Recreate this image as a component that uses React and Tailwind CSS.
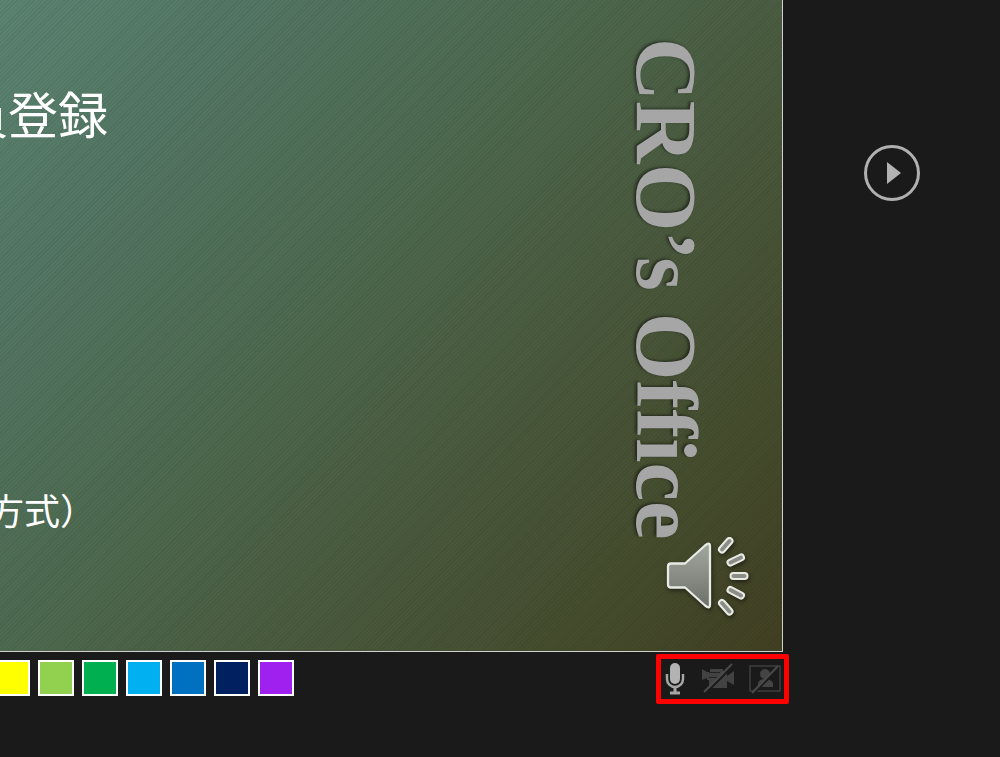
import React from "react";

const swatches = [
  { name: "Yellow", color: "bg-[#ffff00]" },
  { name: "Light green", color: "bg-[#92d050]" },
  { name: "Green", color: "bg-[#00b050]" },
  { name: "Light blue", color: "bg-[#00b0f0]" },
  { name: "Blue", color: "bg-[#0070c0]" },
  { name: "Dark blue", color: "bg-[#002060]" },
  { name: "Purple", color: "bg-[#a020f0]" },
];

function SpeakerIcon() {
  const rays = [
    "M82 29.5 L89.5 21",
    "M90.500 42.500 L101 37.500",
    "M93.500 56 L104.500 56",
    "M90.500 70 L101 75.500",
    "M82 83 L89.500 91.500",
  ];
  return (
    <svg viewBox="26 14 84 80" className="h-20 w-[84px] overflow-visible drop-shadow-[1px_2px_2px_rgba(0,0,0,0.5)]" aria-hidden="true">
      <defs>
        <linearGradient id="cone" x1="0" y1="0" x2="0" y2="1">
          <stop offset="0" stopColor="#a3a89f" />
          <stop offset="1" stopColor="#6d7069" />
        </linearGradient>
      </defs>
      <path d="M31 43.500h14L65 25.500q5-4 5 1v58q0 5-5 1L45 67.500H31q-3 0-3-3v-18q0-3 3-3z" fill="url(#cone)" stroke="#e9ebe5" strokeWidth="2.300" strokeLinejoin="round" />
      {rays.map((d) => (
        <g key={d} strokeLinecap="round">
          <path d={d} stroke="#e9ebe5" strokeWidth="8" />
          <path d={d} stroke="#8b8e86" strokeWidth="4" />
        </g>
      ))}
    </svg>
  );
}

function MicIcon() {
  return (
    <svg viewBox="0 0 20 32" className="h-8 w-5" fill="none" aria-hidden="true">
      <rect x="5" y="0" width="10" height="21" rx="5" fill="#b3b3b3" />
      <path d="M2 11v5a8 8 0 0 0 16 0v-5" stroke="#a6a6a6" strokeWidth="2.500" />
      <path d="M10 24v6M5 30h10" stroke="#a6a6a6" strokeWidth="3" />
    </svg>
  );
}

function CameraOffIcon() {
  return (
    <svg viewBox="0 0 34 32" className="h-8 w-[34px]" aria-hidden="true">
      <path d="M2 6l5 3h3V6h13v4h4v3l7-5v14l-7-4v7H9v-8H7v-2l-5 2z" fill="#424242" />
      <path d="M9 9.500h11M9 14.500h10" stroke="#222" strokeWidth="1" />
      <path d="M5 31L32 4" stroke="#1b1b1b" strokeWidth="2" />
      <path d="M4 29L32 1" stroke="#4a4a4a" strokeWidth="2" />
    </svg>
  );
}

function PersonOffIcon() {
  return (
    <svg viewBox="0 0 32 32" className="size-8" fill="none" aria-hidden="true">
      <rect x="1" y="3" width="30" height="25" stroke="#3e3e3e" strokeWidth="1.500" />
      <circle cx="16" cy="11" r="5" fill="#444" />
      <path d="M9 24v-3c0-3 3-5 7-5s8 2 8 5v3z" fill="#444" />
      <path d="M5 30L29 6" stroke="#1b1b1b" strokeWidth="2" />
      <path d="M3 30L29 3" stroke="#4a4a4a" strokeWidth="2" />
    </svg>
  );
}

export default function App() {
  return (
    <main className="flex min-h-screen overflow-hidden bg-[#1a1a1a] font-['Noto_Sans_CJK_JP',sans-serif] text-white">
      <div className="min-w-0 flex-1">
        <section className="flex justify-between border-r border-b border-[#d0d0d0] bg-[repeating-linear-gradient(135deg,rgba(0,0,0,0.06)_0px,rgba(0,0,0,0.06)_1px,transparent_1px,transparent_3px),linear-gradient(130deg,#5b8371_0%,#537563_20%,#4d694f_42%,#49583c_65%,#444a2b_86%,#413f22_100%)]">
          <div className="overflow-hidden pt-[76px] whitespace-nowrap">
            <h1 className="-ml-[42px] text-[50px] leading-[72px]">員登録</h1>
            <p className="-ml-3 pt-[335px] text-[36px] leading-[52px]">方式）</p>
          </div>
          <div className="flex flex-col items-end pt-[38px] pr-8 pb-[37px]">
            <p className="mr-10 font-['Liberation_Serif',serif] text-[87px] leading-[88px] font-bold whitespace-nowrap text-[#a6a6a6] [font-variant-ligatures:none] [text-shadow:-1px_2px_3px_rgba(0,0,0,0.5)] [writing-mode:vertical-rl]">CRO’s Office</p>
            <button type="button" aria-label="Play audio" className="-mt-1.5">
              <SpeakerIcon />
            </button>
          </div>
        </section>
        <footer className="flex items-start justify-between">
          <div className="-ml-1.5 flex gap-2 pt-2">
            {swatches.map(({ name, color }) => (
              <button key={name} type="button" aria-label={name} className={`size-9 border-2 border-white ${color}`} />
            ))}
          </div>
          <div className="-mr-1.5 mt-0.5 flex items-center gap-[15px] rounded-xs border-[5px] border-[#ff0000] py-1 pr-[3px] pl-1">
            <button type="button" aria-label="Microphone"><MicIcon /></button>
            <button type="button" aria-label="Camera off"><CameraOffIcon /></button>
            <button type="button" aria-label="Camera preview off"><PersonOffIcon /></button>
          </div>
        </footer>
      </div>
      <aside className="flex w-[217px] shrink-0 justify-center pt-[145px]">
        <button type="button" aria-label="Next" className="flex size-14 items-center justify-center self-start rounded-full border-3 border-[#b0b0b0]">
          <svg viewBox="0 0 14 22" className="ml-1 h-[22px] w-3.5" aria-hidden="true"><path d="M0 0l14 11L0 22z" fill="#b3b3b3" /></svg>
        </button>
      </aside>
    </main>
  );
}
